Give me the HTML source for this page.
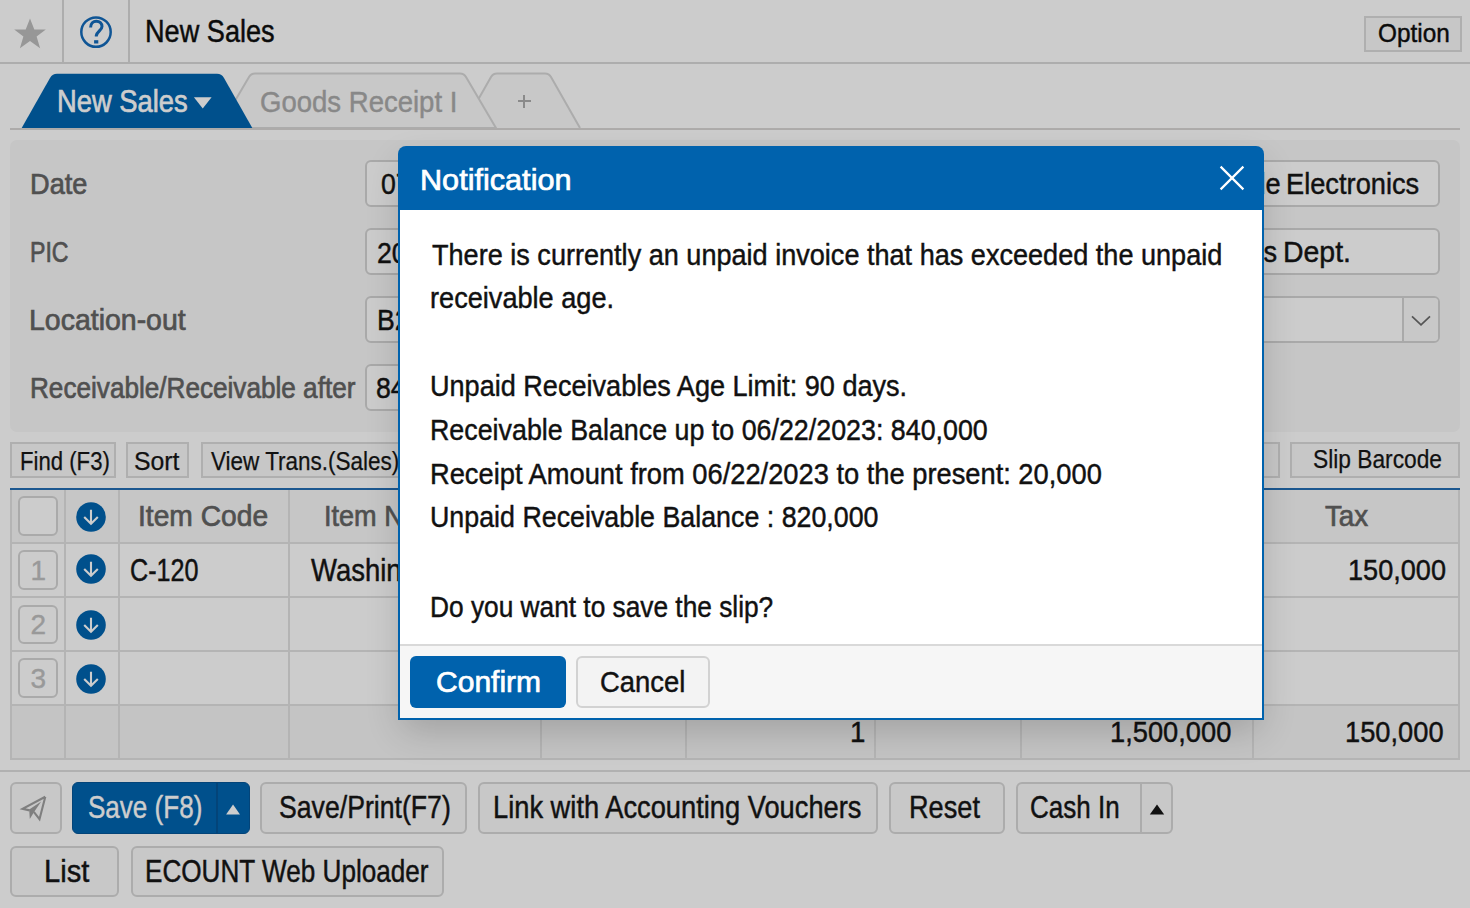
<!DOCTYPE html>
<html><head><meta charset="utf-8"><title>New Sales</title><style>
*{margin:0;padding:0;box-sizing:border-box}
html,body{width:1470px;height:908px;overflow:hidden;background:#cccccc;font-family:"Liberation Sans",sans-serif}
.a{position:absolute}
.tx{position:absolute;white-space:nowrap;transform-origin:0 0}
.btn{position:absolute;background:#c7c7c7;border:2px solid #afafaf}
.rbtn{position:absolute;background:#c8c8c8;border:2px solid #acacac;border-radius:6px}
.inp{position:absolute;background:#cccccc;border:2px solid #a9a9a9;border-radius:6px}
.vl{position:absolute;width:2px;background:#b4b4b4}
.hl{position:absolute;height:2px;background:#b4b4b4}
.nb{position:absolute;left:18px;width:40px;height:39.5px;border:2px solid #aaaaaa;border-radius:6px;background:#cccccc}
.circ{position:absolute;left:76px;width:30px;height:30px}
</style></head>
<body>
<div class="a" style="left:0;top:62px;width:1470px;height:2px;background:#adadad"></div>
<div class="a" style="left:62px;top:0;width:2px;height:62px;background:#adadad"></div>
<div class="a" style="left:127.5px;top:0;width:2px;height:62px;background:#adadad"></div>
<svg class="a" style="left:0;top:0" width="62" height="62" viewBox="0 0 62 62"><polygon points="30,18.6 34.3,29.5 45.8,29.5 36.6,36.6 40.1,48.2 30,41.1 19.9,48.2 23.4,36.6 14.2,29.5 25.7,29.5" fill="#979797"/></svg>
<svg class="a" style="left:78px;top:14px" width="36" height="36" viewBox="0 0 36 36"><circle cx="18" cy="18.1" r="14.7" fill="none" stroke="#0f5595" stroke-width="2.5"/><path d="M12.6 13.6 C12.6 9.4 15.3 7.2 18.3 7.2 C21.6 7.2 24.0 9.4 24.0 12.5 C24.0 16.2 19.1 17.4 18.3 21.6 L18.3 22.6" fill="none" stroke="#0f5595" stroke-width="3"/><rect x="16.1" y="26.2" width="4.2" height="3.3" fill="#0f5595"/></svg>
<div class="btn" style="left:1364px;top:16px;width:98px;height:36px"></div>
<svg class="a" style="left:0;top:60px" width="620" height="72" viewBox="0 60 620 72"><path d="M462,128 L491,77 Q493,73.5 497,73.5 L545,73.5 Q549,73.5 551,77 L580,128" fill="#c8c8c8" stroke="#acacac" stroke-width="2"/><path d="M219,128 L249,77 Q251,73.5 255,73.5 L460,73.5 Q464,73.5 466,77 L496,128 Z" fill="#c8c8c8" stroke="#acacac" stroke-width="2"/><path d="M21.4,128.5 L50,78 Q52.5,73.8 57,73.8 L217,73.8 Q221.5,73.8 224,78 L252.6,128.5 Z" fill="#00508c"/><polygon points="193.9,97.3 211.6,97.3 202.75,108.6" fill="#cdcdcd"/></svg>
<div class="a" style="left:517.5px;top:100.2px;width:13px;height:1.7px;background:#8a8a8a"></div>
<div class="a" style="left:523.2px;top:94.5px;width:1.7px;height:13px;background:#8a8a8a"></div>
<div class="a" style="left:10px;top:128px;width:1450px;height:2px;background:#adabaa"></div>
<div class="a" style="left:10px;top:140px;width:1450px;height:292px;background:#c6c6c6;border-radius:7px"></div>
<div class="inp" style="left:364.5px;top:160.1px;width:1075px;height:47.4px"></div>
<div class="inp" style="left:364.5px;top:227.9px;width:1075px;height:47.4px"></div>
<div class="inp" style="left:364.5px;top:295.6px;width:1075px;height:47.6px"></div>
<div class="a" style="left:1404px;top:298.3px;width:33.5px;height:42.8px;background:#c8c8c8;border-radius:0 4px 4px 0"></div>
<div class="a" style="left:1402px;top:298px;width:2px;height:43.5px;background:#a9a9a9"></div>
<svg class="a" style="left:1410px;top:312px" width="22" height="16" viewBox="0 0 22 16"><polyline points="2,4.4 11,12.8 20,4.4" fill="none" stroke="#555555" stroke-width="1.7"/></svg>
<div class="inp" style="left:364.5px;top:363.9px;width:400px;height:47.4px"></div>
<div class="btn" style="left:10.3px;top:442.3px;width:105.4px;height:35.3px"></div>
<div class="btn" style="left:126.3px;top:442.3px;width:63.1px;height:35.3px"></div>
<div class="btn" style="left:200.6px;top:442.3px;width:260px;height:35.3px"></div>
<div class="btn" style="left:1150px;top:442.3px;width:129.6px;height:35.3px"></div>
<div class="btn" style="left:1290.1px;top:442.3px;width:169.7px;height:35.3px"></div>
<div class="a" style="left:10px;top:490px;width:1450px;height:270px;background:#cccccc"></div>
<div class="a" style="left:10px;top:490px;width:1450px;height:53px;background:#c6c6c6"></div>
<div class="a" style="left:10px;top:705px;width:1450px;height:55px;background:#c4c4c4"></div>
<div class="hl" style="left:10px;top:542px;width:1449px"></div>
<div class="hl" style="left:10px;top:595.6px;width:1449px"></div>
<div class="hl" style="left:10px;top:649.6px;width:1449px"></div>
<div class="hl" style="left:10px;top:704px;width:1449px"></div>
<div class="hl" style="left:10px;top:757.6px;width:1449px"></div>
<div class="vl" style="left:10px;top:490px;height:269.6px"></div>
<div class="vl" style="left:64.1px;top:490px;height:269.6px"></div>
<div class="vl" style="left:117.9px;top:490px;height:269.6px"></div>
<div class="vl" style="left:287.6px;top:490px;height:269.6px"></div>
<div class="vl" style="left:540px;top:490px;height:269.6px"></div>
<div class="vl" style="left:685px;top:490px;height:269.6px"></div>
<div class="vl" style="left:873.8px;top:490px;height:269.6px"></div>
<div class="vl" style="left:1020px;top:490px;height:269.6px"></div>
<div class="vl" style="left:1251.6px;top:490px;height:269.6px"></div>
<div class="vl" style="left:1457.5px;top:490px;height:269.6px"></div>
<div class="a" style="left:10px;top:488px;width:1450px;height:2.2px;background:#1c5890"></div>
<div class="nb" style="top:496.3px"></div>
<div class="nb" style="top:550.2px"></div>
<div class="tx" style="left:30.6px;top:556.8000000000001px;font-size:28px;line-height:28px;color:#999999;-webkit-text-stroke:0.4px #999">1</div>
<div class="nb" style="top:604.5px"></div>
<div class="tx" style="left:30.6px;top:611.1px;font-size:28px;line-height:28px;color:#999999;-webkit-text-stroke:0.4px #999">2</div>
<div class="nb" style="top:658.4px"></div>
<div class="tx" style="left:30.6px;top:665.0px;font-size:28px;line-height:28px;color:#999999;-webkit-text-stroke:0.4px #999">3</div>
<svg class="circ" style="top:502px" viewBox="0 0 30 30"><circle cx="15" cy="15" r="14.8" fill="#00508c"/><path d="M15 7.8 V21.6 M8.2 15.0 L15 21.8 L21.8 15.0" fill="none" stroke="#cdcdcd" stroke-width="2.1"/></svg>
<svg class="circ" style="top:553.8px" viewBox="0 0 30 30"><circle cx="15" cy="15" r="14.8" fill="#00508c"/><path d="M15 7.8 V21.6 M8.2 15.0 L15 21.8 L21.8 15.0" fill="none" stroke="#cdcdcd" stroke-width="2.1"/></svg>
<svg class="circ" style="top:610px" viewBox="0 0 30 30"><circle cx="15" cy="15" r="14.8" fill="#00508c"/><path d="M15 7.8 V21.6 M8.2 15.0 L15 21.8 L21.8 15.0" fill="none" stroke="#cdcdcd" stroke-width="2.1"/></svg>
<svg class="circ" style="top:664px" viewBox="0 0 30 30"><circle cx="15" cy="15" r="14.8" fill="#00508c"/><path d="M15 7.8 V21.6 M8.2 15.0 L15 21.8 L21.8 15.0" fill="none" stroke="#cdcdcd" stroke-width="2.1"/></svg>
<div class="a" style="left:0;top:770px;width:1470px;height:2px;background:#b1b1b1"></div>
<div class="rbtn" style="left:10px;top:782px;width:52px;height:52px"></div>
<svg class="a" style="left:10px;top:782px" width="52" height="52" viewBox="0 0 52 52"><path d="M35.3,14.8 L12.6,26.9 L19.6,28.4 M35.3,14.8 L29.5,37.2 L23.8,29.8" fill="none" stroke="#7f7f7f" stroke-width="2.1" stroke-linejoin="miter"/><path d="M19.2,27.6 L31.2,19.6 L23.9,30.2 L19.8,36.9 Z" fill="#7f7f7f"/></svg>
<div class="a" style="left:72px;top:782px;width:178px;height:52px;background:#00508c;border:1.5px solid #034479;border-radius:6px"></div>
<div class="a" style="left:216.2px;top:782px;width:1.8px;height:52px;background:#034479"></div>
<svg class="a" style="left:224px;top:801.5px" width="18" height="14" viewBox="0 0 18 14"><polygon points="2.1,12.5 16,12.5 9.05,2.6" fill="#cdcdcd"/></svg>
<div class="rbtn" style="left:260.4px;top:782.2px;width:206.9px;height:51.6px"></div>
<div class="rbtn" style="left:478.4px;top:782.2px;width:399.2px;height:51.6px"></div>
<div class="rbtn" style="left:888.6px;top:782.2px;width:116.7px;height:51.6px"></div>
<div class="rbtn" style="left:1016.3px;top:782.2px;width:157.2px;height:51.6px"></div>
<div class="a" style="left:1140px;top:784px;width:2px;height:48px;background:#acacac"></div>
<svg class="a" style="left:1148px;top:802px" width="18" height="14" viewBox="0 0 18 14"><polygon points="1.8,12.5 16.2,12.5 9,2.5" fill="#111"/></svg>
<div class="rbtn" style="left:10.2px;top:846.4px;width:109.2px;height:50.8px"></div>
<div class="rbtn" style="left:130.6px;top:846.4px;width:313.1px;height:50.8px"></div>
<div class="tx" style="left:144.54px;top:17.10px;font-size:30.81px;line-height:30.81px;color:#0b0b0b;-webkit-text-stroke:0.45px #0b0b0b;font-weight:400;transform:scaleX(0.8806)">New Sales</div>
<div class="tx" style="left:1378.08px;top:20.00px;font-size:26.45px;line-height:26.45px;color:#0b0b0b;-webkit-text-stroke:0.45px #0b0b0b;font-weight:400;transform:scaleX(0.9211)">Option</div>
<div class="tx" style="left:57.21px;top:86.00px;font-size:30.52px;line-height:30.52px;color:#cdcdcd;-webkit-text-stroke:0.7px #cdcdcd;font-weight:400;transform:scaleX(0.8951)">New Sales</div>
<div class="tx" style="left:260.08px;top:86.70px;font-size:29.80px;line-height:29.80px;color:#888888;-webkit-text-stroke:0.45px #888888;font-weight:400;transform:scaleX(0.9238)">Goods Receipt I</div>
<div class="tx" style="left:30.38px;top:168.80px;font-size:29.94px;line-height:29.94px;color:#505050;-webkit-text-stroke:0.7px #505050;font-weight:400;transform:scaleX(0.9083)">Date</div>
<div class="tx" style="left:30.44px;top:236.80px;font-size:29.65px;line-height:29.65px;color:#505050;-webkit-text-stroke:0.7px #505050;font-weight:400;transform:scaleX(0.7809)">PIC</div>
<div class="tx" style="left:29.48px;top:304.70px;font-size:29.65px;line-height:29.65px;color:#505050;-webkit-text-stroke:0.7px #505050;font-weight:400;transform:scaleX(0.9605)">Location-out</div>
<div class="tx" style="left:29.64px;top:373.00px;font-size:29.65px;line-height:29.65px;color:#505050;-webkit-text-stroke:0.7px #505050;font-weight:400;transform:scaleX(0.8817)">Receivable/Receivable after</div>
<div class="tx" style="left:380.60px;top:169.20px;font-size:29.65px;line-height:29.65px;color:#111;-webkit-text-stroke:0.45px #111;font-weight:400;transform:scaleX(0.9000)">07/13/2023</div>
<div class="tx" style="left:376.60px;top:237.50px;font-size:29.65px;line-height:29.65px;color:#111;-webkit-text-stroke:0.45px #111;font-weight:400;transform:scaleX(0.9000)">2023 Sales</div>
<div class="tx" style="left:376.50px;top:304.70px;font-size:29.65px;line-height:29.65px;color:#111;-webkit-text-stroke:0.45px #111;font-weight:400;transform:scaleX(0.9000)">B2 Warehouse</div>
<div class="tx" style="left:376.30px;top:373.00px;font-size:29.65px;line-height:29.65px;color:#111;-webkit-text-stroke:0.45px #111;font-weight:400;transform:scaleX(0.9000)">840,000</div>
<div class="tx" style="left:1285.90px;top:169.10px;font-size:30.23px;line-height:30.23px;color:#111;-webkit-text-stroke:0.45px #111;font-weight:400;transform:scaleX(0.9014)">Electronics</div>
<div class="tx" style="left:1210.60px;top:169.10px;font-size:30.23px;line-height:30.23px;color:#111;-webkit-text-stroke:0.45px #111;font-weight:400;transform:scaleX(0.9000)">Apple</div>
<div class="tx" style="left:1283.42px;top:237.00px;font-size:30.23px;line-height:30.23px;color:#111;-webkit-text-stroke:0.45px #111;font-weight:400;transform:scaleX(0.9412)">Dept.</div>
<div class="tx" style="left:1208.70px;top:237.00px;font-size:30.23px;line-height:30.23px;color:#111;-webkit-text-stroke:0.45px #111;font-weight:400;transform:scaleX(0.9000)">Sales</div>
<div class="tx" style="left:19.71px;top:448.00px;font-size:26.16px;line-height:26.16px;color:#111;-webkit-text-stroke:0.25px #111;font-weight:400;transform:scaleX(0.8466)">Find (F3)</div>
<div class="tx" style="left:133.95px;top:448.00px;font-size:26.16px;line-height:26.16px;color:#111;-webkit-text-stroke:0.25px #111;font-weight:400;transform:scaleX(0.9468)">Sort</div>
<div class="tx" style="left:210.90px;top:448.00px;font-size:26.16px;line-height:26.16px;color:#111;-webkit-text-stroke:0.25px #111;font-weight:400;transform:scaleX(0.8600)">View Trans.(Sales)</div>
<div class="tx" style="left:1312.71px;top:446.70px;font-size:25.58px;line-height:25.58px;color:#111;-webkit-text-stroke:0.25px #111;font-weight:400;transform:scaleX(0.8895)">Slip Barcode</div>
<div class="tx" style="left:137.52px;top:500.70px;font-size:30.09px;line-height:30.09px;color:#505050;-webkit-text-stroke:0.7px #505050;font-weight:400;transform:scaleX(0.9382)">Item Code</div>
<div class="tx" style="left:323.90px;top:500.70px;font-size:30.09px;line-height:30.09px;color:#505050;-webkit-text-stroke:0.7px #505050;font-weight:400;transform:scaleX(0.9000)">Item Name</div>
<div class="tx" style="left:1324.80px;top:500.80px;font-size:29.51px;line-height:29.51px;color:#505050;-webkit-text-stroke:0.7px #505050;font-weight:400;transform:scaleX(0.9391)">Tax</div>
<div class="tx" style="left:130.08px;top:554.60px;font-size:30.52px;line-height:30.52px;color:#111;-webkit-text-stroke:0.45px #111;font-weight:400;transform:scaleX(0.8247)">C-120</div>
<div class="tx" style="left:310.90px;top:554.60px;font-size:30.52px;line-height:30.52px;color:#111;-webkit-text-stroke:0.45px #111;font-weight:400;transform:scaleX(0.9000)">Washing Machine</div>
<div class="tx" style="left:1347.68px;top:554.80px;font-size:29.80px;line-height:29.80px;color:#111;-webkit-text-stroke:0.45px #111;font-weight:400;transform:scaleX(0.9095)">150,000</div>
<div class="tx" style="left:849.64px;top:716.90px;font-size:29.80px;line-height:29.80px;color:#111;-webkit-text-stroke:0.45px #111;font-weight:400;transform:scaleX(0.9286)">1</div>
<div class="tx" style="left:1109.97px;top:716.90px;font-size:29.80px;line-height:29.80px;color:#111;-webkit-text-stroke:0.45px #111;font-weight:400;transform:scaleX(0.9154)">1,500,000</div>
<div class="tx" style="left:1345.07px;top:716.90px;font-size:29.80px;line-height:29.80px;color:#111;-webkit-text-stroke:0.45px #111;font-weight:400;transform:scaleX(0.9152)">150,000</div>
<div class="tx" style="left:88.35px;top:792.30px;font-size:30.52px;line-height:30.52px;color:#cdcdcd;-webkit-text-stroke:0.45px #cdcdcd;font-weight:400;transform:scaleX(0.8534)">Save (F8)</div>
<div class="tx" style="left:278.73px;top:792.30px;font-size:30.52px;line-height:30.52px;color:#111;-webkit-text-stroke:0.45px #111;font-weight:400;transform:scaleX(0.8732)">Save/Print(F7)</div>
<div class="tx" style="left:492.91px;top:792.30px;font-size:30.52px;line-height:30.52px;color:#111;-webkit-text-stroke:0.45px #111;font-weight:400;transform:scaleX(0.8939)">Link with Accounting Vouchers</div>
<div class="tx" style="left:909.22px;top:792.30px;font-size:30.52px;line-height:30.52px;color:#111;-webkit-text-stroke:0.45px #111;font-weight:400;transform:scaleX(0.8897)">Reset</div>
<div class="tx" style="left:1029.75px;top:792.30px;font-size:30.52px;line-height:30.52px;color:#111;-webkit-text-stroke:0.45px #111;font-weight:400;transform:scaleX(0.8524)">Cash In</div>
<div class="tx" style="left:43.99px;top:856.00px;font-size:30.52px;line-height:30.52px;color:#111;-webkit-text-stroke:0.45px #111;font-weight:400;transform:scaleX(0.9543)">List</div>
<div class="tx" style="left:145.29px;top:856.00px;font-size:30.52px;line-height:30.52px;color:#111;-webkit-text-stroke:0.45px #111;font-weight:400;transform:scaleX(0.8559)">ECOUNT Web Uploader</div>

<div class="a" style="left:398px;top:146px;width:866px;height:574px;border-radius:8px 8px 0 0;box-shadow:0 14px 36px -4px rgba(0,0,0,0.19);background:#0062ad;overflow:hidden">
  <div class="a" style="left:2px;top:64px;width:862px;height:435px;background:#ffffff"></div>
  <div class="a" style="left:2px;top:497.8px;width:862px;height:2px;background:#d9d9d9"></div>
  <div class="a" style="left:2px;top:499.8px;width:862px;height:72.2px;background:#f6f6f6"></div>
</div>
<div class="a" style="left:410px;top:656.4px;width:155.7px;height:51.2px;background:#0062ad;border-radius:6px"></div>
<div class="a" style="left:576.4px;top:656.4px;width:133.4px;height:51.6px;background:#f3f3f3;border:2px solid #d2d2d2;border-radius:6px"></div>
<svg class="a" style="left:1218px;top:164px" width="28" height="28" viewBox="0 0 28 28"><path d="M2.6 2.6 L25.4 25.4 M25.4 2.6 L2.6 25.4" stroke="#ffffff" stroke-width="2.2"/></svg>

<div class="tx" style="left:419.74px;top:165.30px;font-size:29.80px;line-height:29.80px;color:#ffffff;-webkit-text-stroke:0.7px #ffffff;font-weight:400;transform:scaleX(1.0278)">Notification</div>
<div class="tx" style="left:431.70px;top:239.90px;font-size:29.51px;line-height:29.51px;color:#111;-webkit-text-stroke:0.45px #111;font-weight:400;transform:scaleX(0.9179)">There is currently an unpaid invoice that has exceeded the unpaid</div>
<div class="tx" style="left:429.86px;top:283.30px;font-size:29.51px;line-height:29.51px;color:#111;-webkit-text-stroke:0.45px #111;font-weight:400;transform:scaleX(0.9199)">receivable age.</div>
<div class="tx" style="left:429.86px;top:371.10px;font-size:29.51px;line-height:29.51px;color:#111;-webkit-text-stroke:0.45px #111;font-weight:400;transform:scaleX(0.9178)">Unpaid Receivables Age Limit: 90 days.</div>
<div class="tx" style="left:429.88px;top:415.20px;font-size:29.51px;line-height:29.51px;color:#111;-webkit-text-stroke:0.45px #111;font-weight:400;transform:scaleX(0.9093)">Receivable Balance up to 06/22/2023: 840,000</div>
<div class="tx" style="left:429.85px;top:458.60px;font-size:29.51px;line-height:29.51px;color:#111;-webkit-text-stroke:0.45px #111;font-weight:400;transform:scaleX(0.9247)">Receipt Amount from 06/22/2023 to the present: 20,000</div>
<div class="tx" style="left:429.88px;top:501.90px;font-size:29.51px;line-height:29.51px;color:#111;-webkit-text-stroke:0.45px #111;font-weight:400;transform:scaleX(0.9086)">Unpaid Receivable Balance : 820,000</div>
<div class="tx" style="left:430.12px;top:591.90px;font-size:29.51px;line-height:29.51px;color:#111;-webkit-text-stroke:0.45px #111;font-weight:400;transform:scaleX(0.8906)">Do you want to save the slip?</div>
<div class="tx" style="left:436.39px;top:666.70px;font-size:29.80px;line-height:29.80px;color:#ffffff;-webkit-text-stroke:0.7px #ffffff;font-weight:400;transform:scaleX(1.0078)">Confirm</div>
<div class="tx" style="left:600.08px;top:666.70px;font-size:29.80px;line-height:29.80px;color:#111;-webkit-text-stroke:0.45px #111;font-weight:400;transform:scaleX(0.9200)">Cancel</div>
</body></html>
